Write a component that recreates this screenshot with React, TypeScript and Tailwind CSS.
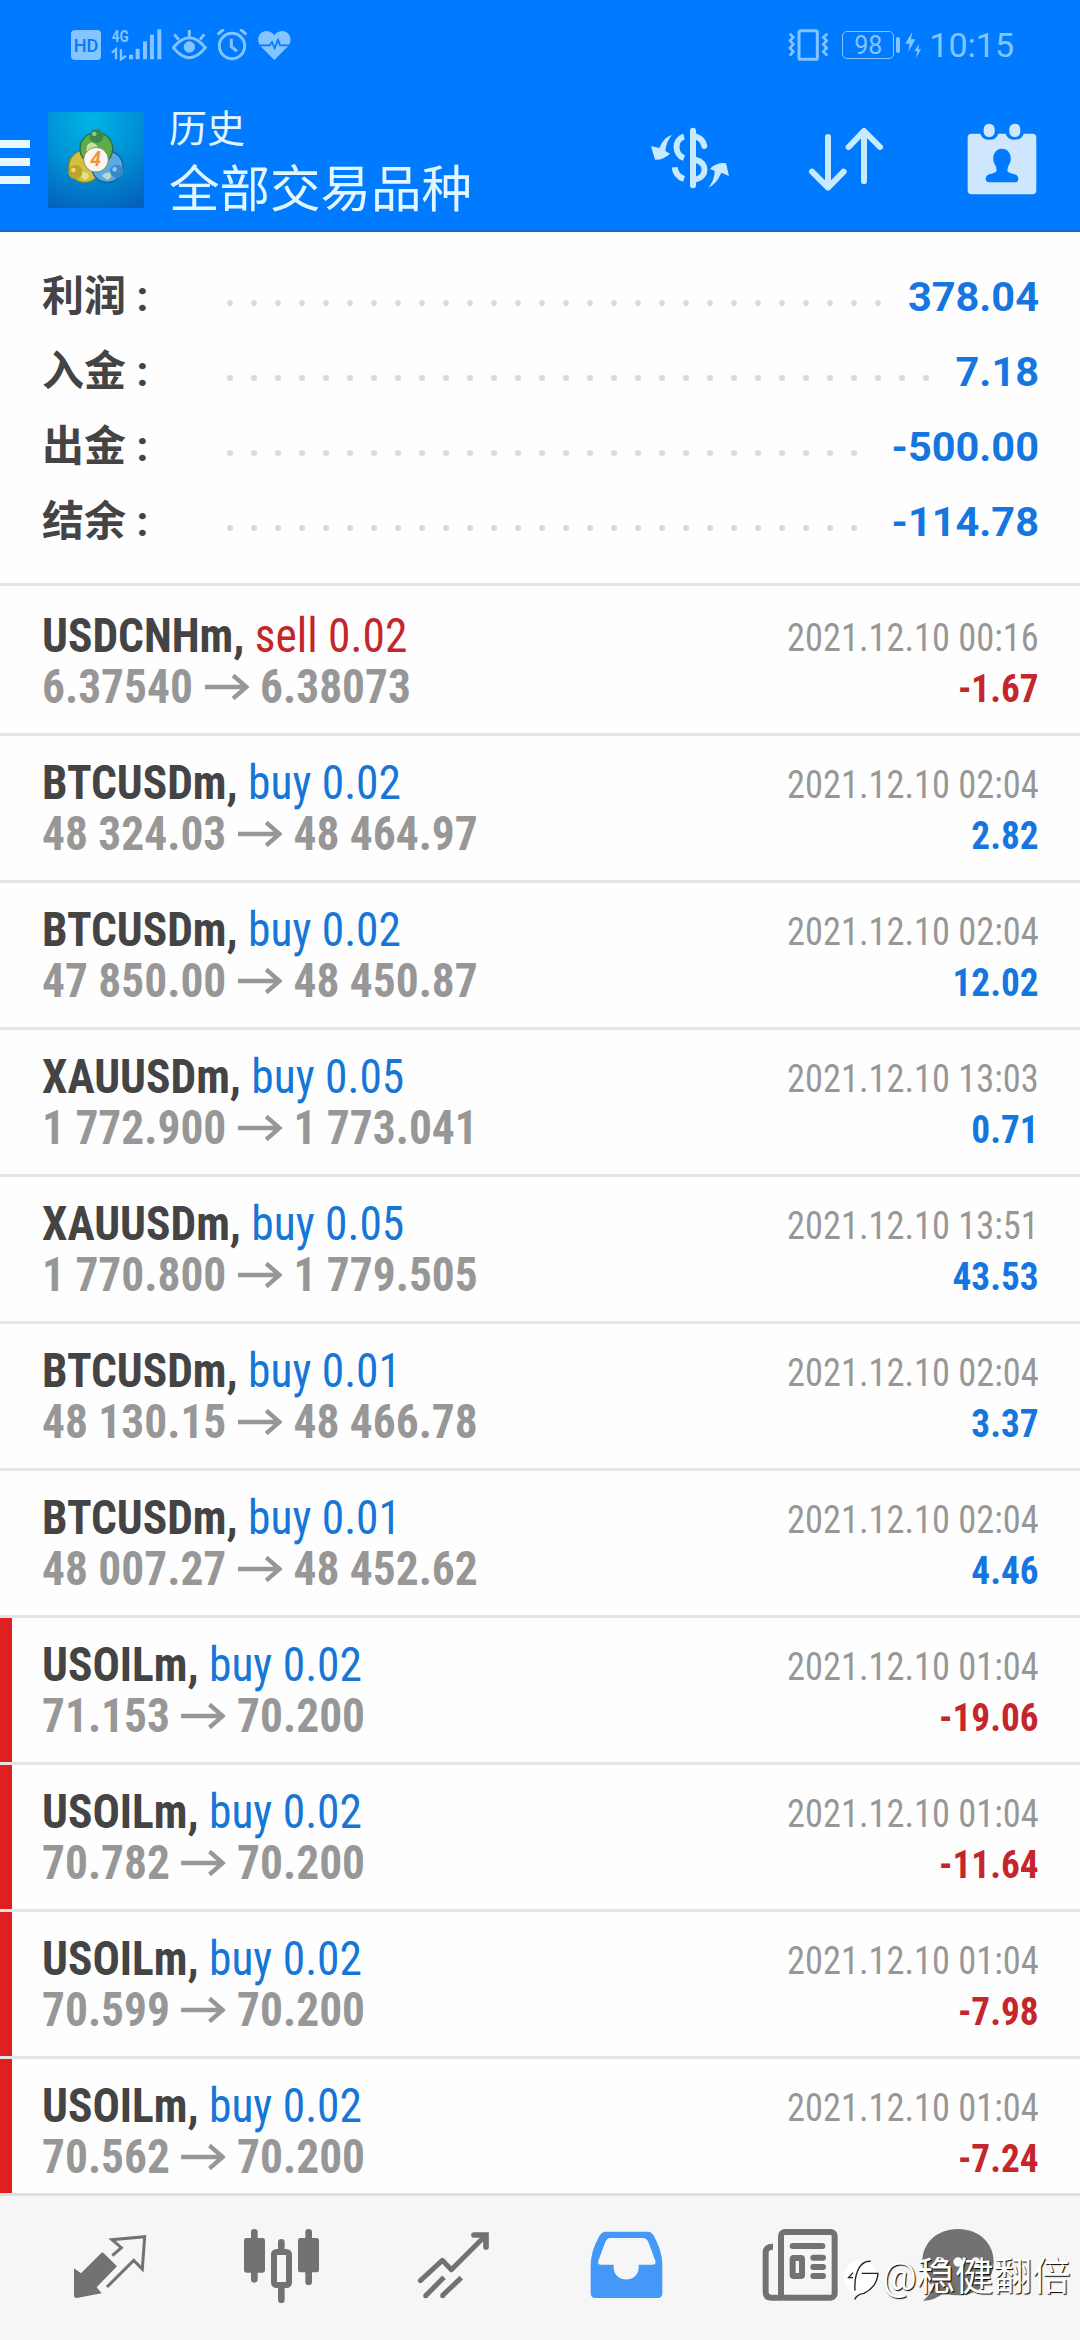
import type { ReactNode } from "react";

type Deal = {
  symbol: string;
  side: "buy" | "sell";
  lots: string;
  open: string;
  close: string;
  time: string;
  profit: string;
  stopped?: boolean;
};

const summary = [
  { label: "利润 :", value: "378.04", dots: 28 },
  { label: "入金 :", value: "7.18", dots: 30 },
  { label: "出金 :", value: "-500.00", dots: 27 },
  { label: "结余 :", value: "-114.78", dots: 27 },
];

const deals: Deal[] = [
  { symbol: "USDCNHm", side: "sell", lots: "0.02", open: "6.37540", close: "6.38073", time: "2021.12.10 00:16", profit: "-1.67" },
  { symbol: "BTCUSDm", side: "buy", lots: "0.02", open: "48 324.03", close: "48 464.97", time: "2021.12.10 02:04", profit: "2.82" },
  { symbol: "BTCUSDm", side: "buy", lots: "0.02", open: "47 850.00", close: "48 450.87", time: "2021.12.10 02:04", profit: "12.02" },
  { symbol: "XAUUSDm", side: "buy", lots: "0.05", open: "1 772.900", close: "1 773.041", time: "2021.12.10 13:03", profit: "0.71" },
  { symbol: "XAUUSDm", side: "buy", lots: "0.05", open: "1 770.800", close: "1 779.505", time: "2021.12.10 13:51", profit: "43.53" },
  { symbol: "BTCUSDm", side: "buy", lots: "0.01", open: "48 130.15", close: "48 466.78", time: "2021.12.10 02:04", profit: "3.37" },
  { symbol: "BTCUSDm", side: "buy", lots: "0.01", open: "48 007.27", close: "48 452.62", time: "2021.12.10 02:04", profit: "4.46" },
  { symbol: "USOILm", side: "buy", lots: "0.02", open: "71.153", close: "70.200", time: "2021.12.10 01:04", profit: "-19.06", stopped: true },
  { symbol: "USOILm", side: "buy", lots: "0.02", open: "70.782", close: "70.200", time: "2021.12.10 01:04", profit: "-11.64", stopped: true },
  { symbol: "USOILm", side: "buy", lots: "0.02", open: "70.599", close: "70.200", time: "2021.12.10 01:04", profit: "-7.98", stopped: true },
  { symbol: "USOILm", side: "buy", lots: "0.02", open: "70.562", close: "70.200", time: "2021.12.10 01:04", profit: "-7.24", stopped: true },
];

export default function App() {
  return (
    <div className="relative flex h-[2340px] w-[1080px] flex-col overflow-hidden bg-[#fefefe] font-['Roboto','Noto_Sans_CJK_SC',sans-serif]">
      <header className="shrink-0 border-b-2 border-[#1868c8] bg-[#007aff]">
        <StatusBar />
        <TitleBar />
      </header>

      {/* Totals */}
      <section className="flex h-[351px] shrink-0 flex-col pt-[27px] pr-[41px] pl-[42px]">
        {summary.map((row) => (
          <div key={row.label} className="flex h-[75px] items-center text-[42px] leading-none font-bold">
            <span className="w-[185px] text-[#444]">{row.label}</span>
            <span className="flex gap-[18px] pt-[12px]">
              {Array.from({ length: row.dots }, (_, i) => (
                <i key={i} className="size-[6px] rounded-full bg-[#dadada]" />
              ))}
            </span>
            <span className="ml-auto text-[41.5px] text-[#1676e0]">{row.value}</span>
          </div>
        ))}
      </section>

      {/* Deals */}
      <main className="min-h-0 flex-1 overflow-hidden border-t-[3px] border-[#e4e4e4] pt-[3px]">
        {deals.map((deal, i) => (
          <DealRow key={i} deal={deal} />
        ))}
      </main>

      <BottomNav />
      <Watermark />
    </div>
  );
}

function DealRow({ deal }: { deal: Deal }) {
  return (
    <div className="flex h-[147px] border-b-[3px] border-[#e4e4e4]">
      <div className={deal.stopped ? "w-[12px] bg-[#e02020]" : "w-[12px]"} />
      <div className="flex flex-1 justify-between pt-[21px] pr-[41px] pl-[30px] [font-stretch:75%]">
        <div className="origin-left scale-x-[0.946] text-[48px] leading-[51px] whitespace-nowrap">
          <p>
            <span className="font-bold text-[#444]">{deal.symbol},</span>{" "}
            <span className={deal.side === "buy" ? "text-[#1676d8]" : "text-[#c4262b]"}>
              {deal.side} {deal.lots}
            </span>
          </p>
          <p className="flex items-center font-bold text-[#979797]">
            {deal.open}
            <svg className="mx-[12px] h-[26px] w-[47px]" viewBox="0 0 47 26" fill="none" stroke="currentColor" strokeWidth="4.5">
              <path d="M0 13H44M30 1.5L44 13L30 24.5" />
            </svg>
            {deal.close}
          </p>
        </div>
        <div className="pt-[3px] text-right text-[39px] leading-[51px] whitespace-nowrap">
          <p className="origin-right scale-x-[0.933] text-[#979797]">{deal.time}</p>
          <p
            className={
              deal.profit.startsWith("-")
                ? "origin-right scale-x-[0.955] font-bold text-[#c4262b]"
                : "origin-right scale-x-[0.955] font-bold text-[#1676e0]"
            }
          >
            {deal.profit}
          </p>
        </div>
      </div>
    </div>
  );
}

function StatusBar() {
  return (
    <div className="flex h-[90px] items-center pr-[66px] pl-[71px] text-[#86c4ff]">
      {/* HD */}
      <svg className="h-[32px] w-[30px]" viewBox="213 87 90 96">
        <rect x="213" y="90" width="90" height="90" rx="12" fill="currentColor" />
        <text x="258" y="155" textAnchor="middle" fontSize="54" fontWeight="500" textLength="74" lengthAdjust="spacingAndGlyphs" fill="#007aff">HD</text>
      </svg>
      {/* 4G signal */}
      <svg className="ml-[10px] h-[34px] w-[52px]" viewBox="333 84 156 102" fill="currentColor">
        <text x="335" y="126" fontSize="50" fontWeight="700" textLength="51" lengthAdjust="spacingAndGlyphs">4G</text>
        <path d="M336 158L348 148V178M363 148V178L378 168" fill="none" stroke="currentColor" strokeWidth="7" />
        <path d="M387 164h12v14h-12zM407 146h12v32h-12zM429 124h12v54h-12zM450 104h12v74h-12zM472 88h12v90h-12z" />
      </svg>
      {/* Eye comfort */}
      <svg className="ml-[9px] h-[32px] w-[35px]" viewBox="516 87 105 96" fill="none" stroke="currentColor" strokeWidth="9">
        <path d="M520 143Q568 83 616 143Q568 203 520 143Z" />
        <circle cx="568" cy="141" r="17" fill="currentColor" stroke="none" />
        <path d="M568 90V110M523 103L536 119M613 103L600 119" />
      </svg>
      {/* Alarm */}
      <svg className="ml-[9px] h-[32px] w-[33px]" viewBox="651 87 99 96" fill="none" stroke="currentColor" strokeWidth="9">
        <circle cx="699" cy="138" r="38" />
        <path d="M656 103L674 88M742 103L724 88M697 116V140L714 154" />
      </svg>
      {/* Heart rate */}
      <svg className="ml-[9px] h-[32px] w-[33px]" viewBox="777 87 99 96">
        <path d="M826 180L784 138C768 116 784 92 803 93Q818 94 826 106Q834 94 849 93C868 92 884 116 868 138Z" fill="currentColor" />
        <path d="M780 136H812L819 126L827 145L837 119L843 136H872" fill="none" stroke="#007aff" strokeWidth="5" />
      </svg>

      {/* Vibrate */}
      <svg className="ml-auto h-[32px] w-[41px]" viewBox="562 84 123 96" fill="none" stroke="currentColor" strokeWidth="9">
        <rect x="595" y="89" width="55" height="86" rx="5" />
        <path d="M567 98L578 109L568 119L578 130L568 141L578 152L567 164M680 98L668 109L678 119L668 130L678 141L668 152L680 164" strokeWidth="8" />
      </svg>
      {/* Battery */}
      <div className="ml-[13px] flex h-[28px] w-[52px] items-center justify-center rounded-[5px] border text-[25px] leading-none">98</div>
      <div className="ml-[2px] h-[16px] w-[4px] rounded-sm bg-current" />
      <svg className="ml-[5px] h-[28px] w-[17px]" viewBox="915 93 51 84" fill="currentColor">
        <path d="M937 95L916 131H929L925 156L946 118H933ZM957 131L943 154H952L948 175L963 148H955Z" />
      </svg>
      <span className="ml-[7px] text-[34px] leading-none">10:15</span>
    </div>
  );
}

function TitleBar() {
  return (
    <div className="flex h-[140px] items-center pr-[40px]">
      <div className="flex flex-col gap-[10px] pt-[4px]">
        <i className="h-[8px] w-[30px] bg-[#e6f8ff]" />
        <i className="h-[8px] w-[30px] bg-[#e6f8ff]" />
        <i className="h-[8px] w-[30px] bg-[#e6f8ff]" />
      </div>
      <AppLogo />
      <div className="ml-[25px] pt-[7px] text-[#e2f6ff]">
        <p className="text-[38px] leading-[53px]">历史</p>
        <h1 className="text-[50.5px] leading-[68px]">全部交易品种</h1>
      </div>

      {/* Currency */}
      <svg className="ml-auto h-[96px] w-[80px] text-[#c8eaff]" viewBox="150 336 240 288" fill="none" stroke="currentColor">
        <path d="M279 392V556" strokeWidth="18" strokeLinecap="round" />
        <path d="M252 410C222 418 222 464 252 474M224 502Q226 528 252 537" strokeWidth="18" />
        <path d="M288 410Q308 416 313 438M288 480C322 488 322 530 288 538" strokeWidth="18" strokeLinecap="round" />
        <path d="M216 405Q192 410 178 444L153 438L165 479Q190 480 210 461L196 453Q198 425 216 405ZM325 563Q350 552 364 518L387 528L378 490Q352 486 330 506L344 513Q344 540 325 563Z" fill="currentColor" stroke="none" />
      </svg>
      {/* Sort */}
      <svg className="ml-[77px] h-[96px] w-[80px] text-[#c8eaff]" viewBox="621 336 240 288" fill="none" stroke="currentColor" strokeWidth="18" strokeLinecap="round" strokeLinejoin="round">
        <path d="M684 411V562M636 515L684 563L731 515M792 544V394M746 441L792 393L840 441" />
      </svg>
      {/* Calendar */}
      <svg className="ml-[78px] h-[96px] w-[75px] text-[#cfe6ff]" viewBox="1095 336 225 288" fill="currentColor">
        <path d="M1115 401H1141Q1146 419 1168 419Q1190 419 1195 401H1217Q1222 419 1244 419Q1266 419 1271 401H1297Q1309 401 1309 413V571Q1309 583 1297 583H1115Q1103 583 1103 571V413Q1103 401 1115 401Z" />
        <rect x="1151" y="371" width="33" height="40" rx="16" />
        <rect x="1228" y="371" width="33" height="40" rx="16" />
        <path d="M1206 446C1184 446 1175 470 1182 488Q1190 500 1190 512Q1188 518 1168 523Q1156 527 1157 538Q1158 547 1168 547H1245Q1254 547 1255 538Q1256 527 1244 523Q1224 518 1222 512Q1222 500 1230 488C1237 470 1228 446 1206 446Z" fill="#007aff" />
      </svg>
    </div>
  );
}

function AppLogo() {
  return (
    <svg className="ml-[18px] size-[96px]" viewBox="144 336 288 288">
      <defs>
        <radialGradient id="sky" cx="0.45" cy="0.1" r="1">
          <stop offset="0" stopColor="#00b4e8" />
          <stop offset="0.5" stopColor="#0090d4" />
          <stop offset="1" stopColor="#0460bc" />
        </radialGradient>
      </defs>
      <rect x="144" y="336" width="288" height="288" fill="url(#sky)" />
      <circle cx="254" cy="499" r="48" fill="#d4c03c" stroke="#6f8a3c" strokeWidth="4" />
      <circle cx="322" cy="500" r="47" fill="#58acE4" stroke="#1c5c9c" strokeWidth="4" />
      <circle cx="289" cy="446" r="49" fill="#5cac48" stroke="#2c6c40" strokeWidth="4" />
      <path d="M262 436Q272 420 289 434L300 452H258Z" fill="#c8e0a0" />
      <path d="M240 518Q262 510 268 530L256 540Q240 534 240 518ZM336 520Q316 512 306 528L322 540Q336 534 336 520Z" fill="#e8ecb8" opacity="0.7" />
      <circle cx="289" cy="408" r="21" fill="#3c8848" />
      <circle cx="226" cy="516" r="21" fill="#bca428" />
      <circle cx="350" cy="514" r="20" fill="#3888cc" />
      <circle cx="283" cy="402" r="7" fill="#8cc490" />
      <circle cx="220" cy="510" r="7" fill="#e4d884" />
      <circle cx="344" cy="508" r="7" fill="#90c8f0" />
      <circle cx="288" cy="479" r="37" fill="#fbf6f0" stroke="#8c8c60" strokeWidth="3" />
      <text x="287" y="499" textAnchor="middle" fontSize="58" fontWeight="700" fontStyle="italic" fill="#ee9440">4</text>
    </svg>
  );
}

function NavItem({ viewBox, children, last }: { viewBox: string; children: ReactNode; last?: boolean }) {
  return (
    <div className={last ? "flex w-[148px] justify-center" : "flex w-[172px] justify-center"}>
      <svg className="size-[80px]" viewBox={viewBox} fill="none" stroke="currentColor">
        {children}
      </svg>
    </div>
  );
}

function BottomNav() {
  return (
    <nav className="flex h-[147px] shrink-0 border-t-[3px] border-[#e0e0e0] bg-[#f6f6f7] pt-[30px] pl-[24px] text-[#727272]">
      {/* Quotes */}
      <NavItem viewBox="210 138 240 240">
        <path d="M310 218L351 259L290 322L305 340L230 354Q222 354 222 346V265L243 280L303 220Q306 216 310 218Z" fill="currentColor" stroke="none" />
        <path d="M337 227L364 203L336 179L434 170L427 267L401 241L321 321" strokeWidth="9" />
      </NavItem>
      {/* Charts */}
      <NavItem viewBox="726 138 240 240">
        <path d="M763 157V298M926 157V305M844 187V210M844 320V359" strokeWidth="20" strokeLinecap="round" />
        <rect x="732" y="174" width="63" height="104" rx="7" fill="currentColor" stroke="none" />
        <rect x="894" y="174" width="63" height="103" rx="7" fill="currentColor" stroke="none" />
        <rect x="822" y="216" width="45" height="99" rx="7" strokeWidth="18" />
      </NavItem>
      {/* Trade */}
      <NavItem viewBox="162 138 240 240">
        <path d="M181 302L247 241L274 269L376 167" strokeWidth="15" strokeLinecap="round" strokeLinejoin="round" />
        <path d="M342 165H378V201" strokeWidth="17" strokeLinecap="round" />
        <path d="M197 347L252 292M247 347L304 293" strokeWidth="15" />
        <circle cx="197" cy="347" r="7.5" fill="currentColor" stroke="none" />
        <circle cx="248" cy="347" r="7.5" fill="currentColor" stroke="none" />
      </NavItem>
      {/* History */}
      <NavItem viewBox="678 138 240 240">
        <path d="M738 155H862Q875 155 882 168Q907 215 907 254V340Q907 354 893 354H706Q692 354 692 340V254Q692 215 718 168Q725 155 738 155Z" fill="#4499f8" stroke="none" />
        <path d="M752 174H848Q860 174 865 186L886 242Q889 254 878 254H836V264C834 310 764 310 761 264V254H724Q711 254 715 242L736 186Q741 174 752 174Z" fill="#f6f6f7" stroke="none" />
      </NavItem>
      {/* News */}
      <NavItem viewBox="114 138 240 240">
        <rect x="183" y="156" width="161" height="197" rx="12" strokeWidth="18" />
        <path d="M159 200Q137 200 137 218V335Q137 353 155 353H190" strokeWidth="18" />
        <path d="M218 198H307M280 233H309M280 261H309M280 288H309" strokeWidth="18" strokeLinecap="round" />
        <rect x="218" y="234" width="28" height="54" rx="3" strokeWidth="18" />
      </NavItem>
      {/* Chat */}
      <NavItem viewBox="594 138 240 240" last>
        <path d="M714 147C650 147 607 190 607 245Q607 290 636 318Q634 344 609 362Q645 362 670 338Q690 346 714 346C778 346 821 302 821 245C821 190 778 147 714 147Z" fill="currentColor" stroke="none" />
        <circle cx="661" cy="246" r="14" fill="#f6f6f7" stroke="none" />
        <circle cx="714" cy="246" r="14" fill="#f6f6f7" stroke="none" />
        <circle cx="767" cy="246" r="14" fill="#f6f6f7" stroke="none" />
      </NavItem>
    </nav>
  );
}

function Watermark() {
  return (
    <div className="absolute top-[2254px] left-[844px] flex items-center text-[38.5px] leading-[46px] whitespace-nowrap text-white [text-shadow:1px_1px_1px_#000]">
      <svg className="mr-[3px] h-[46px] w-[35px]" viewBox="372 232 105 138" fill="none">
        <circle cx="421" cy="302" r="50" fill="#fff" />
        <path d="M383 303H399M405 342Q402 300 418 272Q432 252 452 254M425 290H474Q472 330 432 350Q412 352 404 368M399 288L386 303" stroke="#222" strokeWidth="4" />
      </svg>
      <span>@稳健翻倍</span>
    </div>
  );
}
